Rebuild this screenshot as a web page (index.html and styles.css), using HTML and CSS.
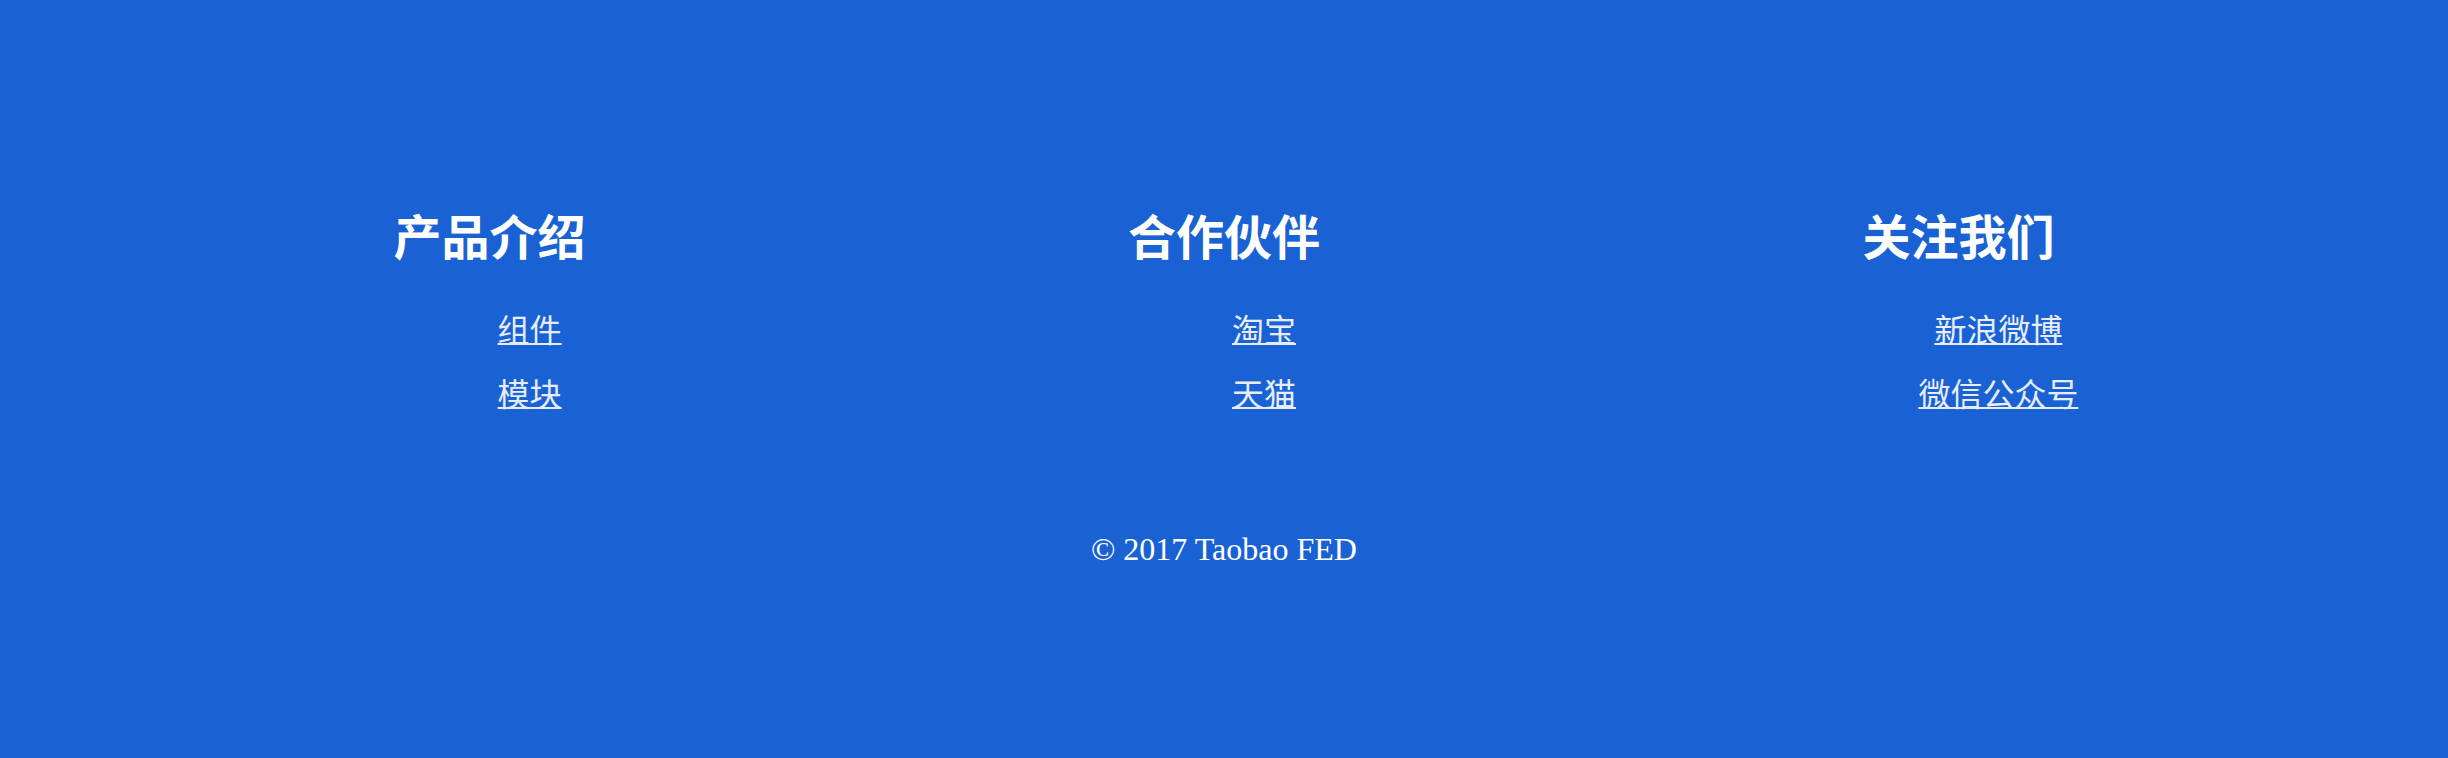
FILE: index.html
```html
<!DOCTYPE html>
<html lang="zh-CN">
<head>
<meta charset="utf-8">
<title>Footer</title>
<link rel="stylesheet" href="styles.css">
</head>
<body>
<footer class="site-footer">
  <div class="columns">
    <section class="col">
      <h2 class="col-title">产品介绍</h2>
      <ul class="links">
        <li><a href="#">组件</a></li>
        <li><a href="#">模块</a></li>
      </ul>
    </section>
    <section class="col">
      <h2 class="col-title">合作伙伴</h2>
      <ul class="links">
        <li><a href="#">淘宝</a></li>
        <li><a href="#">天猫</a></li>
      </ul>
    </section>
    <section class="col">
      <h2 class="col-title">关注我们</h2>
      <ul class="links">
        <li><a href="#">新浪微博</a></li>
        <li><a href="#">微信公众号</a></li>
      </ul>
    </section>
  </div>
  <p class="copyright">© 2017 Taobao FED</p>
</footer>
</body>
</html>
```
FILE: styles.css
```css
html, body {
  margin: 0;
  padding: 0;
}
body {
  background: #1a62d4;
  color: #ffffff;
  font-family: "Liberation Serif", "Noto Sans CJK SC", serif;
  width: 2448px;
  height: 758px;
  overflow: hidden;
}
.site-footer {
  padding-top: 213px;
}
.columns {
  width: 90%;
  margin: 0 auto;
  display: flex;
}
.col {
  flex: 1;
  text-align: center;
}
.col-title {
  margin: 2px 0 0;
  font-size: 48px;
  line-height: 48px;
  font-weight: bold;
}
.links {
  list-style: none;
  margin: 36px 0 0;
  padding: 0 0 0 80px;
}
.links li {
  font-size: 32px;
  line-height: 64px;
  height: 64px;
}
.links a {
  color: #e6ecfa;
  text-decoration: underline;
  text-decoration-thickness: 2px;
}
.copyright {
  margin: 106px 0 0;
  text-align: center;
  font-size: 32px;
  line-height: 32px;
}
```
